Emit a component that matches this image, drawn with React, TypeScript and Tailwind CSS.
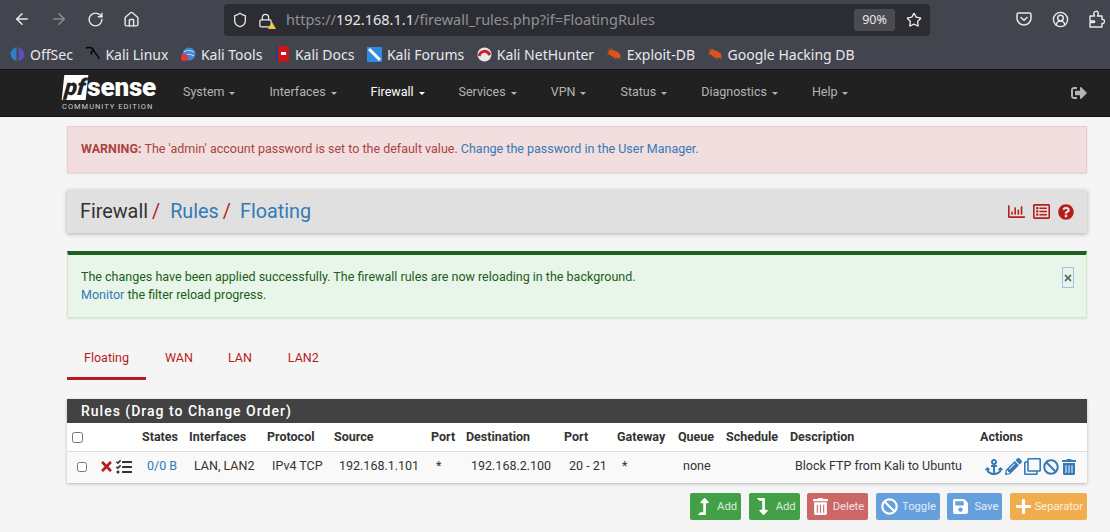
import React from "react";
import {
  FaAnchor, FaPencilAlt, FaRegClone, FaBan, FaTrashAlt, FaRegListAlt, FaQuestionCircle, FaSignOutAlt, FaTimes, FaTasks,
  FaLevelUpAlt, FaLevelDownAlt, FaSave, FaPlus, FaRegChartBar,
} from "react-icons/fa";
import { ArrowLeft, ArrowRight, RotateCw, Home, Shield, Lock, Star, CircleUserRound } from "lucide-react";

const Bug = () => (
  <svg width="18" height="14" viewBox="0 0 18 14"><ellipse cx="9" cy="7" rx="7" ry="3.5" fill="#d9541e" transform="rotate(25 9 7)" /><path d="M2 2l5 3M5 1l4 4M1 7h4M11 10l5 2M8 10l3 3" stroke="#d9541e" strokeWidth="1" /></svg>
);

const Pocket = () => (
  <svg width="16" height="16" viewBox="0 0 16 16" fill="none" stroke="currentColor" strokeWidth="1.5" strokeLinecap="round" strokeLinejoin="round">
    <path d="M2.5 2h11A1.500 1.500 0 0 1 15 3.500V7a7 7 0 0 1-14 0V3.500A1.500 1.500 0 0 1 2.500 2z" />
    <path d="M5 6.500l3 2.800 3-2.800" />
  </svg>
);

const Ext = () => (
  <svg width="16" height="18" viewBox="0 0 16 18" fill="none" stroke="currentColor" strokeWidth="1.4" strokeLinejoin="round">
    <path d="M1 6h4.500C5 4.500 4.500 3.800 5 2.600 5.600 1.200 8 .8 9 2.200c.7 1 .2 2.400-.5 3.800H13v3.500c1.600-.6 2.500.6 2.500 1.800S14.600 14 13 13.300V17H1v-4.500h4c.8 0 1-1 .3-1.500H1z" />
  </svg>
);

const bookmarks: [string, React.ReactNode][] = [
  ["OffSec", <svg key="o" width="15" height="16" viewBox="0 0 15 16"><path d="M6.500 1C2 3 0 6 .5 9c.5 3 3 5 6 6z" fill="#2f80c8" /><path d="M8.500 1c4 2 6 5 6 8s-3 5-6 6z" fill="#5a4fc0" /></svg>],
  ["Kali Linux", <svg key="k" width="16" height="16" viewBox="0 0 16 16" fill="none" stroke="#050505" strokeWidth="1.4"><path d="M1 2c4-1 7 0 8 3 1 3 4 3 5 8M9 5C6 5 5 7 7 8" /></svg>],
  ["Kali Tools", <svg key="t" width="15" height="16" viewBox="0 0 15 16"><circle cx="8" cy="8" r="6.500" fill="#3f88d8" /><path d="M3 6c3-2 6-2 10 0M4 9c3-1 6-1 9 1" stroke="#cfe4f8" strokeWidth="1" fill="none" /><rect x="0" y="8" width="7" height="7" rx="3" fill="#e03a32" /></svg>],
  ["Kali Docs", <svg key="d" width="13" height="16" viewBox="0 0 13 16"><rect x="0" y="0" width="13" height="16" rx="1" fill="#c9161c" /><rect x="0" y="0" width="2" height="16" fill="#27407a" /><rect x="5" y="6" width="5" height="3" fill="#fff" /></svg>],
  ["Kali Forums", <svg key="f" width="15" height="15" viewBox="0 0 15 15"><rect width="15" height="15" fill="#2f8be0" /><path d="M2 2l11 11" stroke="#fff" strokeWidth="3" /></svg>],
  ["Kali NetHunter", <svg key="n" width="15" height="15" viewBox="0 0 15 15"><circle cx="7.500" cy="7.500" r="7" fill="#e8e8e8" /><path d="M2 9c2-6 8-6 11-1" stroke="#c8202a" strokeWidth="3" fill="none" /></svg>],
  ["Exploit-DB", <Bug key="e" />],
  ["Google Hacking DB", <Bug key="g" />],
];

const nav = ["System", "Interfaces", "Firewall", "Services", "VPN", "Status", "Diagnostics", "Help"];

const table: { w: string; h: string; v: React.ReactNode }[] = [
  { w: "w-[47px]", h: "States", v: <span className="text-[#337ab7]">0/0 B</span> },
  { w: "w-[78px]", h: "Interfaces", v: "LAN, LAN2" },
  { w: "w-[67px]", h: "Protocol", v: "IPv4 TCP" },
  { w: "w-[97px]", h: "Source", v: "192.168.1.101" },
  { w: "w-[35px]", h: "Port", v: "*" },
  { w: "w-[98px]", h: "Destination", v: "192.168.2.100" },
  { w: "w-[53px]", h: "Port", v: "20 - 21" },
  { w: "w-[61px]", h: "Gateway", v: "*" },
  { w: "w-[48px]", h: "Queue", v: "none" },
  { w: "w-[64px]", h: "Schedule", v: "" },
  { w: "w-[190px]", h: "Description", v: "Block FTP from Kali to Ubuntu" },
];

const Btn = ({ bg, icon, label, w }: { bg: string; icon: React.ReactNode; label: string; w: string }) => (
  <div className={`${bg} ${w} h-[27px] rounded-[2px] flex items-center justify-between pl-[5px] pr-[4px] text-white/80 text-[11.2px]`}>
    <span className="text-white text-[17px]">{icon}</span>
    <span className="mt-[1px]">{label}</span>
  </div>
);

export default function App() {
  return (
    <div className="w-[1110px] h-[532px] overflow-hidden bg-[#f5f5f5] font-['Roboto',sans-serif] text-[12.5px] text-[#333]">
      {/* browser chrome */}
      <div className="h-[70px] bg-[#42454e] border-b border-[#14161a] font-['Noto_Sans',sans-serif]">
        <div className="h-[38px] flex items-center text-[#e8e8ea]">
          <div className="w-[224px] shrink-0 flex items-center pl-[13px] gap-[19px]">
            <ArrowLeft size={18} />
            <ArrowRight size={18} className="text-[#8a8c92]" />
            <RotateCw size={17} />
            <Home size={17} />
          </div>
          <div className="w-[706px] shrink-0 h-[32px] mt-[2px] rounded-[4px] bg-[#2c2d33] flex items-center pl-[8px] pr-[6px]">
            <Shield size={16} />
            <span className="relative ml-[10px]">
              <Lock size={15} className="block" />
              <span className="absolute right-[-3px] bottom-[-1px] w-0 h-0 border-x-[4px] border-x-transparent border-b-[7px] border-b-[#f5c542]" />
            </span>
            <span className="ml-[13px] text-[14.5px] text-[#8f9196] whitespace-nowrap">
              https://<span className="text-[#e8e8ea]">192.168.1.1</span>/firewall_rules.php?if=FloatingRules
            </span>
            <span className="ml-auto w-[41px] h-[22px] rounded-[3px] bg-[#4a4b51] text-[12.5px] flex items-center justify-center">90%</span>
            <Star size={16} className="ml-[11px] mr-[2px]" />
          </div>
          <div className="flex-1 flex items-center justify-end gap-[20px] pr-[5px]">
            <Pocket />
            <CircleUserRound size={17} />
            <Ext />
          </div>
        </div>
        <div className="h-[32px] flex items-center pl-[9px] gap-[11.5px] text-[14px] text-[#e8e8ea]">
          {bookmarks.map(([n, i]) => (
            <div key={n} className="flex items-center gap-[4px] whitespace-nowrap">
              <span className="w-[17px] flex justify-center">{i}</span><span>{n}</span>
            </div>
          ))}
        </div>
      </div>

      {/* navbar */}
      <div className="h-[47px] bg-[#212121] flex items-center border-b border-[#151515]">
        <div className="ml-[62px] w-[94px] flex flex-col">
          <div className="flex items-center h-[25px]">
            <span className="ml-[1px] bg-white text-[#212121] font-black italic text-[23px] leading-[25px] w-[25px] h-[25px] text-center -skew-x-6">pf</span>
            <span className="text-white font-black text-[26px] leading-[25px] tracking-[-0.2px]">sense</span>
          </div>
          <span className="text-[7.5px] tracking-[1px] text-[#cfcfcf] leading-[10px] mt-[2px] whitespace-nowrap">COMMUNITY EDITION</span>
        </div>
        <div className="ml-[27px] flex items-center gap-[34px] text-[12.5px] text-[#b4b4b4] -mt-[2px]">
          {nav.map((n) => (
            <span key={n} className={`flex items-center gap-[5px] ${n === "Firewall" ? "text-white" : ""}`}>
              {n}
              <span className="w-0 h-0 border-x-[3px] border-x-transparent border-t-[3px] border-t-current mt-[2px]" />
            </span>
          ))}
        </div>
        <FaSignOutAlt size={16} className="ml-auto mr-[23px] text-[#b4b4b4]" />
      </div>

      <div className="w-[1020px] ml-[67px] mt-[9px]">
        <div className="h-[47px] bg-[#f2dede] border border-[#ebccd1] shadow-[0_1px_2px_rgba(0,0,0,0.1)] flex items-center pl-[13px] text-[#a94442]">
          <b>WARNING:&nbsp;</b>The 'admin' account password is set to the default value.&nbsp;<span className="text-[#337ab7]">Change the password in the User Manager.</span>
        </div>

        <div className="mt-[17px] h-[43px] pt-[1px] bg-[#e0e0e0] rounded-[1px] shadow-[0_1px_4px_rgba(0,0,0,0.3)] flex items-center pl-[13px] pr-[13px] text-[19.8px]">
          <span>Firewall</span><span className="text-[#b71c1c] ml-[4px]">/</span>
          <span className="text-[#337ab7] ml-[10px]">Rules</span><span className="text-[#b71c1c] ml-[4px]">/</span>
          <span className="text-[#337ab7] ml-[9px]">Floating</span>
          <div className="ml-auto flex items-center gap-[8px] text-[#b71c1c] -mt-[1px]">
            <FaRegChartBar size={17} />
            <FaRegListAlt size={17} />
            <FaQuestionCircle size={16} />
          </div>
        </div>

        <div className="mt-[18px] h-[67px] bg-[#e8f5e9] border-t-[4px] border-t-[#1b5e20] border-x border-b border-x-[#d6e9c6] border-b-[#d6e9c6] shadow-[0_1px_2px_rgba(0,0,0,0.1)] flex items-start text-[#1b5e20] pl-[13px] pt-[13px] leading-[18px]">
          <div>
            The changes have been applied successfully. The firewall rules are now reloading in the background.<br />
            <span className="text-[#337ab7]">Monitor</span> the filter reload progress.
          </div>
          <div className="ml-auto mr-[12px] -mt-[1px] w-[12px] h-[21px] border border-[#9cc2e5] flex items-center justify-center text-[#5f6b63]">
            <FaTimes size={10} />
          </div>
        </div>

        {/* tabs */}
        <div className="mt-[22px] flex h-[40px] text-[#b71c1c]">
          <div className="w-[79px] border-b-[3px] border-b-[#b71c1c] pt-[9px] text-center">Floating</div>
          <div className="pt-[9px] ml-[19px]">WAN</div>
          <div className="pt-[9px] ml-[35px]">LAN</div>
          <div className="pt-[9px] ml-[36px]">LAN2</div>
        </div>

        {/* rules panel */}
        <div className="mt-[19px] bg-white shadow-[0_1px_3px_rgba(0,0,0,0.25)]">
          <div className="h-[24px] bg-[#424242] text-white text-[14px] font-medium tracking-[1px] pl-[14px] flex items-center">Rules (Drag to Change Order)</div>
          <div className="h-[29px] flex items-center font-bold border-b border-[#ddd]">
            <div className="w-[75px] pl-[5px]"><input type="checkbox" className="block w-[11px] h-[11px]" readOnly /></div>
            {table.map((c, i) => (
              <div key={i} className={`${c.w} whitespace-nowrap`}>{c.h}</div>
            ))}
            <div>Actions</div>
          </div>
          <div className="h-[31px] pb-[2px] flex items-center bg-[#f9f9f9]">
            <div className="w-[75px] pl-[10px] flex items-center">
              <input type="checkbox" className="block w-[10px] h-[10px]" readOnly />
              <FaTimes size={15} className="ml-[12px] text-[#b71c1c]" />
              <FaTasks size={16} className="ml-[2px] text-[#333]" />
            </div>
            {table.map((c, i) => (
              <div key={i} className={`${c.w} pl-[5px] whitespace-nowrap`}>{c.v}</div>
            ))}
            <div className="flex items-center gap-[2px] text-[#337ab7] pl-[5px]">
              <FaAnchor size={18} />
              <FaPencilAlt size={17} />
              <FaRegClone size={17} />
              <FaBan size={16} />
              <FaTrashAlt size={16} />
            </div>
          </div>
        </div>

        {/* buttons */}
        <div className="mt-[10px] flex justify-end gap-[7.6px]">
          <Btn bg="bg-[#43a047]" w="w-[51px]" icon={<FaLevelUpAlt />} label="Add" />
          <Btn bg="bg-[#43a047]" w="w-[51px]" icon={<FaLevelDownAlt />} label="Add" />
          <Btn bg="bg-[#cb6767]" w="w-[61px]" icon={<FaTrashAlt />} label="Delete" />
          <Btn bg="bg-[#66a0dc]" w="w-[64px]" icon={<FaBan />} label="Toggle" />
          <Btn bg="bg-[#66a0dc]" w="w-[55px]" icon={<FaSave />} label="Save" />
          <Btn bg="bg-[#f0ad4e]" w="w-[77px]" icon={<FaPlus />} label="Separator" />
        </div>
      </div>
    </div>
  );
}
